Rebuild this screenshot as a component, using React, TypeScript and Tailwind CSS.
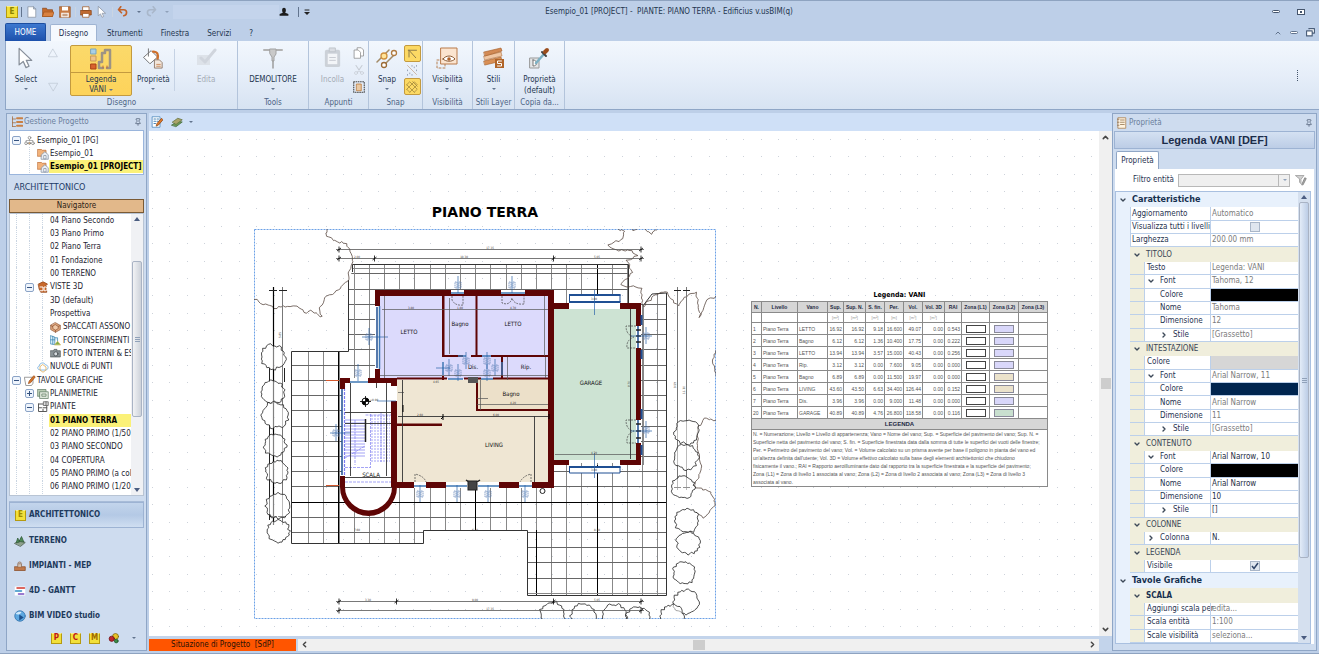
import type { ReactNode } from "react";
import { ChevronDown, ChevronLeft, ChevronRight, ChevronUp, Pin } from "lucide-react";

type Point = [number, number];

/* ---------- small icons ---------- */

const Svg = ({ box = "0 0 16 16", className, children }: { box?: string; className: string; children: ReactNode }) => (
  <svg viewBox={box} className={`shrink-0 ${className}`} fill="none" strokeLinejoin="round" strokeLinecap="round" aria-hidden="true">
    {children}
  </svg>
);

const Caret = ({ className = "fill-slate-500" }: { className?: string }) => (
  <svg viewBox="0 0 4 2" className={`h-[2px] w-1 shrink-0 ${className}`} aria-hidden="true">
    <path d="M0 0h4L2 2z" />
  </svg>
);

const ScrollArrow = ({ className = "" }: { className?: string }) => (
  <svg viewBox="0 0 6 4" className={`h-1 w-[6px] shrink-0 fill-[#4a5c80] ${className}`} aria-hidden="true">
    <path d="M0 0h6L3 4z" />
  </svg>
);

const CursorIcon = ({ className }: { className: string }) => (
  <Svg className={className}>
    <path d="M3 1v12l3-2.500 2 4.500 2.200-1-2-4.300h4z" fill="#fff" stroke="#868e99" strokeWidth="0.900" />
  </Svg>
);

const LetterIcon = ({ letter, color, className = "size-3" }: { letter: string; color: string; className?: string }) => (
  <span className={`flex shrink-0 items-center justify-center border border-[#b59a10] border-t-[#f6ec8c] bg-[#f2e03a] font-bold leading-none ${color} ${className}`}>
    {letter}
  </span>
);

const HouseProjectIcon = () => (
  <Svg className="size-3">
    <path d="M1 2h5l1 1h5v8H1z" fill="#f2b27a" stroke="#c0703a" />
    <path d="M6 9l4.5-4L15 9v6H6z" fill="#e9eef5" stroke="#8491a3" />
    <path d="M9 14v-4h3v4z" fill="#fff" stroke="#8491a3" />
  </Svg>
);

const NodesIcon = () => (
  <Svg className="size-[11px]">
    <path d="M8 4v4M3 11V8h10v3" stroke="#8a8a8a" />
    <circle cx="8" cy="4" r="2" fill="#fff" stroke="#777" />
    <circle cx="3" cy="12" r="2" fill="#fff" stroke="#777" />
    <circle cx="13" cy="12" r="2" fill="#fff" stroke="#777" />
    <circle cx="8" cy="12" r="1.6" fill="#e3ad6a" stroke="#777" />
  </Svg>
);

const View3dIcon = () => (
  <Svg className="size-3">
    <path d="M2 4l6-3 6 3-2 2 1 9-8 0-2-4z" fill="#c8682a" stroke="#8f3f12" />
    <path d="M4 8h4v5H4M10 8h2c2 1 2 4 0 5h-2z" stroke="#fff" strokeWidth="1.3" />
  </Svg>
);

const SectionIcon = () => (
  <Svg className="size-[11px]">
    <path d="M8 1l7 4v6l-7 4-7-4V5z" fill="#dfa57c" stroke="#8d5534" />
    <path d="M8 4l4 2.500v3L8 12 4 9.500v-3zM1 5l3 1.500M15 5l-3 1.500M8 12v3" stroke="#8d5534" fill="#f0c9a8" />
  </Svg>
);

const PhotoInsertIcon = () => (
  <Svg className="size-[11px]">
    <path d="M1 1l6 2v11l-6-1zM7 4h4v5M1 7h6M4 2v11" fill="#d5ecf8" stroke="#2f7fae" />
    <path d="M7 14l4-5 4 5z" fill="#7cae4a" stroke="#c7b24d" />
  </Svg>
);

const CameraIcon = () => (
  <Svg className="size-[11px]">
    <path d="M1 4h4l1-2h4v2h5v9H1z" fill="#8a9396" stroke="#475052" />
    <circle cx="8.500" cy="8.500" r="3" fill="#d7dde0" stroke="#343b3d" />
  </Svg>
);

const CloudIcon = () => (
  <Svg className="size-3">
    <path d="M4 12C0 12 0 7 3 7c0-5 7-6 8-2 5 0 5 7 1 7z" stroke="#6aa8dc" />
    <path d="M8 5l4 3v4l-4 3-4-3V8z" stroke="#e0a748" />
  </Svg>
);

const SheetPenIcon = () => (
  <Svg className="size-3">
    <path d="M1 3h11v8l-2 3H3z" fill="#fff" stroke="#7d7d7d" />
    <path d="M6 11l1-3 6-7 2 1.500L9 10z" fill="#d7772d" stroke="#9d4b14" />
  </Svg>
);

const SitePlanIcon = () => (
  <Svg className="size-3">
    <path d="M1 2h11v9H1z" fill="#b7cbb2" stroke="#66806a" />
    <path d="M4 5h11v9H4z" fill="#dfe8dc" stroke="#66806a" />
    <path d="M7 8h5v3H7z" stroke="#66806a" />
  </Svg>
);

const FloorIcon = () => (
  <Svg className="size-3">
    <path d="M2 4h6M2 4v10h11V7M2 9h4M8 9h5M8 11v3" stroke="#555" strokeWidth="1.300" />
    <path d="M9 1h6v5H9z" fill="#ddd" stroke="#555" />
    <path d="M12 1v5" stroke="#555" />
  </Svg>
);

/* ---------- title bar ---------- */

const IconButton = ({ label, className = "", children }: { label: string; className?: string; children: ReactNode }) => (
  <button aria-label={label} title={label} className={`flex shrink-0 items-center justify-center ${className}`}>
    {children}
  </button>
);

const TitleBar = () => (
  <header className="flex h-6 items-center border-t border-[#8ea3c0] pr-3 pb-[2px] pl-[6px]">
    <div className="flex items-center">
      <LetterIcon letter="E" color="text-[#8b8200] text-[8px]" />
      <span className="ml-[3px] h-[10px] w-px bg-slate-500" />
      <IconButton label="Nuovo" className="ml-1">
        <Svg className="size-3"><path d="M3 1h7l3 3v11H3zM10 1v3h3" fill="#fff" stroke="#8a94a3" /></Svg>
      </IconButton>
      <IconButton label="Apri" className="ml-1">
        <Svg className="size-3"><path d="M1 3h5l1 2h7v9H1z" fill="#c4692a" stroke="#8e4716" /><path d="M3 8h13l-2 6H1z" fill="#d9813f" stroke="#a55820" /></Svg>
      </IconButton>
      <IconButton label="Salva" className="ml-[5px]">
        <Svg className="size-3"><path d="M1 1h14v14H1z" fill="#c77a44" stroke="#9b5524" /><path d="M4 1h8v5H4zM3 9h10v6H3z" fill="#fff" /><path d="M5 11h6M5 13h6" stroke="#9b5524" /></Svg>
      </IconButton>
      <span className="mx-1 h-[10px] w-px bg-slate-300" />
      <IconButton label="Stampa">
        <Svg className="size-3"><path d="M4 1h8v5H4z" fill="#fff" stroke="#a35b27" /><path d="M1 6h14v6H1z" fill="#c06a31" stroke="#8b4516" /><path d="M4 10h8v5H4z" fill="#fff" stroke="#a35b27" /></Svg>
      </IconButton>
      <IconButton label="Seleziona" className="ml-1"><CursorIcon className="size-3" /></IconButton>
      <span className="mx-1 h-[10px] w-px bg-slate-300" />
      <IconButton label="Annulla" className="gap-2">
        <Svg className="size-3"><path d="M2 5h7c5 0 5 7 0 8M5 1L2 5l4 4" stroke="#c2632a" strokeWidth="2.200" /></Svg>
        <Caret />
      </IconButton>
      <IconButton label="Ripristina" className="ml-1 gap-2">
        <Svg className="size-3"><path d="M14 5H7c-5 0-5 7 0 8M11 1l3 4-4 4" stroke="#a9b7ca" strokeWidth="2.200" /></Svg>
        <Caret className="fill-slate-400" />
      </IconButton>
      <span className="ml-1 h-[14px] w-[106px] bg-[#c4d4ec]" />
      <IconButton label="Utente">
        <Svg className="size-[10px]"><path d="M5 5c0-5 6-5 6 0 0 3-1 3-1 4l5 2v3H1v-3l5-2c0-1-1-1-1-4z" fill="#1c1c1c" /></Svg>
      </IconButton>
      <span className="ml-[9px] h-[10px] w-px bg-slate-500" />
      <IconButton label="Personalizza" className="ml-[5px]">
        <Svg box="0 0 6 6" className="size-[6px]"><path d="M1 1h4" stroke="#222" /><path d="M0 3h6L3 6z" fill="#222" /></Svg>
      </IconButton>
    </div>
    <h1 className="grow pl-[6px] text-center whitespace-pre text-[#24364f]">
      {"Esempio_01 [PROJECT] -  PIANTE: PIANO TERRA - Edificius v.usBIM(q)"}
    </h1>
    <div className="flex w-[285px] items-center justify-end gap-[17px] pr-[2px]">
      <IconButton label="Riduci">
        <span className="h-[3px] w-2 rounded-xs border border-slate-600 bg-white" />
      </IconButton>
      <IconButton label="Ingrandisci">
        <span className="flex h-[6px] w-2 items-center justify-center border border-slate-600 bg-white"><span className="size-[2px] bg-slate-600" /></span>
      </IconButton>
    </div>
  </header>
);

const tabs = ["Strumenti", "Finestra", "Servizi", "?"];

const RibbonTabs = () => (
  <nav className="flex h-[17px] items-end pr-1 pl-[5px] text-[#24364f]">
    <button className="h-[18px] w-[41px] rounded-t-xs border border-b-0 border-[#1c4ea0] bg-linear-to-b from-[#3d78cf] to-[#1d51ac] text-white">HOME</button>
    <button className="ml-1 h-[17px] w-[47px] rounded-t-xs border border-b-0 border-[#9fb4d2] bg-[#f5f9fe] pt-px text-[#1e3250]">Disegno</button>
    <div className="flex h-full grow items-center gap-[18px] pt-[2px] pl-[10px]">
      {tabs.map((tab) => (
        <button key={tab}>{tab}</button>
      ))}
    </div>
    <div className="flex h-full items-center gap-2">
      <IconButton label="Comprimi"><ChevronUp size={8} strokeWidth={3} className="text-slate-500" /></IconButton>
      <IconButton label="Riduci documento"><span className="h-[3px] w-2 rounded-xs border border-slate-500 bg-white" /></IconButton>
      <IconButton label="Ripristina documento">
        <Svg className="size-[9px]"><path d="M5 1h10v8h-3M1 5h10v9H1z" stroke="#4b5f7b" strokeWidth="2" fill="#fff" /></Svg>
      </IconButton>
    </div>
  </nav>
);

/* ---------- ribbon ---------- */

const Group = ({ title, className, children }: { title: string; className: string; children: ReactNode }) => (
  <section className={`flex shrink-0 flex-col border-r border-[#b3c4db] ${className}`}>
    <div className="flex grow items-start justify-center pt-1">{children}</div>
    <h2 className="text-center leading-[12px] text-[#4d6484]">{title}</h2>
  </section>
);

const Tool = ({ label, icon, caret = true, muted = false, className = "" }: { label: string; icon: ReactNode; caret?: boolean; muted?: boolean; className?: string }) => (
  <button disabled={muted} className={`flex flex-col items-center leading-[11px] ${muted ? "text-[#a5acb6]" : "text-[#24364f]"} ${className}`}>
    <span className="flex h-[29px] items-center justify-center pb-1">{icon}</span>
    <span className="whitespace-pre-line">{label}</span>
    {caret && <span className="flex h-2 items-center"><Caret /></span>}
  </button>
);

const Ribbon = () => (
  <div className="ml-[5px] flex h-[69px] border-b border-l border-[#8fa6c6] bg-linear-to-b from-[#f2f7fd] via-[#e6eef9] to-[#d7e3f2]">
    <Group title="Disegno" className="w-[232px]">
      <div className="flex w-full items-start">
        <Tool className="w-10" label="Select" icon={<CursorIcon className="size-[22px]" />} />
        <div className="flex w-[14px] flex-col items-center gap-6 pt-[3px]">
          <IconButton label="Su"><Svg className="size-[10px]"><path d="M8 2l7 12H1z" stroke="#b9c2cd" /></Svg></IconButton>
          <IconButton label="Giù"><Svg className="size-[10px]"><path d="M8 14L1 2h14z" stroke="#b9c2cd" /></Svg></IconButton>
        </div>
        <button className="ml-[10px] flex w-[63px] flex-col items-center rounded-xs border border-[#c39a3f] bg-linear-to-b from-[#fbd96a] to-[#fdd35a] leading-[10px] text-[#24364f]">
          <span className="flex h-[27px] w-full items-center justify-center border-b border-[#c39a3f]">
            <Svg box="0 0 22 22" className="size-[22px]">
              <path d="M1 1h5v5H1z" fill="#a9d0e6" stroke="#7aa5bf" /><path d="M1 8h5v5H1z" fill="#f0c48b" stroke="#c99a55" /><path d="M1 16h5v5H1z" fill="#d9632e" stroke="#aa4315" />
              <path d="M13 20H9v-6h3V5h3V2h5v18h-3" stroke="#9d9384" strokeWidth="2.500" />
              <path d="M13 20v-2M17 20v-2" stroke="#c26a3a" />
            </Svg>
          </span>
          <span className="pt-[2px]">Legenda</span>
          <span className="flex items-center gap-[3px]">VANI <Caret /></span>
        </button>
        <Tool className="w-[42px]" label="Proprietà" icon={
          <Svg box="0 0 24 24" className="size-[22px]">
            <path d="M2 11L10 4l7 7-8 7z" fill="#fff" stroke="#6d6d6d" /><path d="M7 2v8" stroke="#6d6d6d" /><path d="M12 5c5 0 6 3 5 8" stroke="#cd6f2b" strokeWidth="2.500" />
            <path d="M14 14h5l3 3v6h-8z" fill="#f3e7dc" stroke="#8f7a6a" /><path d="M16 19h4M16 21h4" stroke="#c98a5c" />
          </Svg>
        } />
        <span className="mt-1 h-[42px] w-px bg-[#c5d2e4]" />
        <Tool className="w-[62px]" muted caret={false} label="Edita" icon={
          <Svg box="0 0 22 22" className="size-[22px]"><path d="M2 8h13v10H2z" fill="#dde2e9" /><path d="M6 11l4 4L20 3" stroke="#d0d5dd" strokeWidth="3" /></Svg>
        } />
      </div>
    </Group>
    <Group title="Tools" className="w-[71px]">
      <Tool label="DEMOLITORE" icon={
        <Svg box="0 0 22 22" className="size-[22px]"><path d="M2 3h18" stroke="#b3b3b3" strokeWidth="2" /><path d="M8 2h6v5l-2 3v4h-2v-4L8 7z" fill="#c9c9c9" stroke="#a2a2a2" /><path d="M11 14v7" stroke="#9d9d9d" strokeWidth="1.500" /></Svg>
      } />
    </Group>
    <Group title="Appunti" className="w-[60px]">
      <Tool className="w-10" muted caret={false} label="Incolla" icon={
        <Svg box="0 0 20 22" className="size-[21px]"><rect x="2" y="3" width="16" height="18" rx="2" fill="#ccd1d8" /><path d="M7 1h6v4H7z" fill="#dadde3" stroke="#bfc4cb" /><path d="M5 7h10v11H5z" fill="#f3f5f8" /><path d="M7 11h6M7 14h6" stroke="#c6cad1" /></Svg>
      } />
      <div className="flex flex-col gap-[5px] pt-[2px]">
        <IconButton label="Copia"><Svg className="size-3"><path d="M6 1h5l3 3v8H6z" fill="#fff" stroke="#8a8a8a" /><path d="M2 4h5l3 3v8H2z" fill="#fff" stroke="#8a8a8a" /></Svg></IconButton>
        <IconButton label="Taglia"><Svg className="size-3"><path d="M4 2l6 9M12 2l-6 9" stroke="#c8cdd5" strokeWidth="1.500" /><circle cx="4" cy="12" r="2" stroke="#c8cdd5" /><circle cx="12" cy="12" r="2" stroke="#c8cdd5" /></Svg></IconButton>
        <IconButton label="Seleziona tutto"><Svg className="size-3"><path d="M1 1h14v14H1z" stroke="#444" strokeDasharray="1 2" strokeWidth="1.500" /><path d="M5 4h6v9H5z" fill="#e9c9a4" stroke="#b8732f" /></Svg></IconButton>
      </div>
    </Group>
    <Group title="Snap" className="w-[54px]">
      <Tool className="w-[33px]" label="Snap" icon={
        <Svg box="0 0 22 22" className="size-[22px]"><path d="M1 15L13 3M7 19L19 7" stroke="#a28a66" strokeWidth="1.500" /><circle cx="8" cy="9" r="3" fill="#ffe49a" stroke="#cf8f3a" strokeWidth="1.300" /><circle cx="8" cy="18" r="2.500" fill="#fff" stroke="#9a6a35" strokeWidth="1.300" /><circle cx="18" cy="6" r="2.500" fill="#fff" stroke="#b07c43" strokeWidth="1.300" /></Svg>
      } />
      <div className="flex w-[17px] flex-col">
        <IconButton label="Snap spigolo" className="size-[17px] rounded-xs border border-[#c39a3f] bg-[#fcd964]"><Svg className="size-3"><path d="M3 3h11M4 3l9 10M4 3v9" stroke="#8d7a47" strokeWidth="1.300" /></Svg></IconButton>
        <IconButton label="Snap punti" className="h-4"><Svg className="size-3"><path d="M2 2l12 12" stroke="#c4a68f" /><path d="M2 8v1M8 2v1M14 2v1M14 8v1M2 14v1M8 14v1M5 12v1M11 4v1" stroke="#7d8aa0" /></Svg></IconButton>
        <IconButton label="Snap griglia" className="size-[17px] rounded-xs border border-[#c39a3f] bg-[#fcd964]"><Svg className="size-3"><path d="M1 5l4-4 10 10-4 4M1 11L11 1l4 4L5 15M1 5l10 10M1 11l4 4M9 1l6 6" stroke="#a0843a" /></Svg></IconButton>
      </div>
    </Group>
    <Group title="Visibilità" className="w-[50px]">
      <Tool label="Visibilità" icon={
        <Svg box="0 0 22 22" className="size-[22px]"><path d="M1 13h8v8H1z" stroke="#b78053" strokeDasharray="2 2" /><path d="M5 1h16v16H5z" fill="#fbe4cf" stroke="#b97a4a" /><path d="M7 12c3-4 9-4 12 0-3 3-9 3-12 0z" stroke="#8b5a33" fill="#fff" /><circle cx="13" cy="12" r="1.800" fill="#b0632b" /></Svg>
      } />
    </Group>
    <Group title="Stili Layer" className="w-[42px]">
      <Tool label="Stili" icon={
        <Svg box="0 0 22 22" className="size-[22px]"><path d="M1 14l17-4 1 4-17 4z" fill="#d98f55" stroke="#a45b22" strokeWidth="0.600" /><path d="M1 9l17-4 1 4-17 4z" fill="#f0c7a4" stroke="#b1713d" strokeWidth="0.600" /><path d="M1 5l17-4 1 3L2 9z" fill="#d28a55" stroke="#a45b22" strokeWidth="0.600" /><path d="M12 12h9v9h-9z" fill="#b06428" /><path d="M18.500 14h-4v2.500h4v2.500h-4" stroke="#fff" /></Svg>
      } />
    </Group>
    <Group title="Copia da..." className="w-[50px]">
      <Tool caret={false} label={"Proprietà\n(default)"} icon={
        <Svg box="0 0 22 22" className="size-[22px]"><path d="M2 11h9v10H2z" fill="#e4e6e8" stroke="#999" /><path d="M5 13v6c5 0 5-6 0-6z" stroke="#777" fill="#fff" /><path d="M8 16L16 7" stroke="#7db1c4" strokeWidth="2.500" /><path d="M14 5l4 4" stroke="#444" strokeWidth="2" /><path d="M17 5l2-2" stroke="#9b4d1c" strokeWidth="4" /></Svg>
      } />
    </Group>
    <div className="flex grow items-center justify-end pr-[21px]">
      <span className="h-[11px] border-l border-dotted border-slate-600" />
    </div>
  </div>
);

/* ---------- left panel ---------- */

const PanelHeader = ({ title, icon }: { title: string; icon: ReactNode }) => (
  <div className="flex h-4 shrink-0 items-center gap-px px-[2px] text-[#6b7f9c]">
    {icon}
    <h2 className="grow">{title}</h2>
    <IconButton label="Blocca"><Pin size={8} className="text-[#44536b]" /></IconButton>
  </div>
);

type Cell = "guide" | "open" | "closed" | "none" | ReactNode;

const TreeCell = ({ cell }: { cell: Cell }) => {
  if (cell === "open" || cell === "closed") {
    return (
      <button aria-label={cell === "open" ? "Chiudi" : "Espandi"} className="mx-[2px] flex size-[9px] shrink-0 items-center justify-center rounded-xs border border-[#8ba3c6] bg-[#eef4fc]">
        <svg viewBox="0 0 5 5" className="size-[5px]" stroke="#34517e" aria-hidden="true">
          <path d={cell === "open" ? "M0 2.5h5" : "M0 2.500h5M2.500 0v5"} />
        </svg>
      </button>
    );
  }
  if (cell === "guide") {
    return <span className="flex w-[13px] shrink-0 justify-center self-stretch"><span className="border-l border-dotted border-slate-300" /></span>;
  }
  return <span className="flex w-[13px] shrink-0 items-center justify-center">{cell === "none" ? null : cell}</span>;
};

const TreeRow = ({ cells, label, active = false }: { cells: Cell[]; label: string; active?: boolean }) => (
  <li className="flex min-h-0 flex-1 items-center overflow-hidden whitespace-nowrap">
    {cells.map((cell, i) => (
      <TreeCell key={i} cell={cell} />
    ))}
    <span className={active ? "grow self-stretch bg-[#fbf178] pl-px leading-[13px] font-bold text-black" : "pl-px text-[#1d2430]"}>{label}</span>
  </li>
);

const navRows: { cells: Cell[]; label: string; active?: boolean }[] = [
  { cells: ["guide", "guide", "guide"], label: "04 Piano Secondo" },
  { cells: ["guide", "guide", "guide"], label: "03 Piano Primo" },
  { cells: ["guide", "guide", "guide"], label: "02 Piano Terra" },
  { cells: ["guide", "guide", "guide"], label: "01 Fondazione" },
  { cells: ["guide", "guide", "guide"], label: "00 TERRENO" },
  { cells: ["guide", "open", <View3dIcon />], label: "VISTE 3D" },
  { cells: ["guide", "guide", "guide"], label: "3D (default)" },
  { cells: ["guide", "guide", "guide"], label: "Prospettiva" },
  { cells: ["guide", "guide", "guide", <SectionIcon />], label: "SPACCATI ASSONO" },
  { cells: ["guide", "guide", "guide", <PhotoInsertIcon />], label: "FOTOINSERIMENTI" },
  { cells: ["guide", "guide", "guide", <CameraIcon />], label: "FOTO INTERNI & ES" },
  { cells: ["guide", "guide", <CloudIcon />], label: "NUVOLE di PUNTI" },
  { cells: ["open", <SheetPenIcon />], label: "TAVOLE GRAFICHE" },
  { cells: ["guide", "closed", <SitePlanIcon />], label: "PLANIMETRIE" },
  { cells: ["guide", "open", <FloorIcon />], label: "PIANTE" },
  { cells: ["guide", "guide", "guide"], label: "01 PIANO TERRA", active: true },
  { cells: ["guide", "guide", "guide"], label: "02 PIANO PRIMO (1/50)" },
  { cells: ["guide", "guide", "guide"], label: "03 PIANO SECONDO" },
  { cells: ["guide", "guide", "guide"], label: "04 COPERTURA" },
  { cells: ["guide", "guide", "guide"], label: "05 PIANO PRIMO (a col" },
  { cells: ["guide", "guide", "guide"], label: "06 PIANO PRIMO (1/20" },
];

const modules = [
  { label: "ARCHITETTONICO", icon: <LetterIcon letter="E" color="text-[#a08b00] text-[8px]" className="size-[11px]" />, active: true },
  { label: "TERRENO", icon: <Svg className="size-3"><path d="M1 11l7-4 7 3-6 5z" fill="#8da08c" stroke="#4d5e50" /><path d="M3 10l2-6 2 5zM7 8l3-6 3 7z" fill="#4d8a55" stroke="#2f5a38" /></Svg> },
  { label: "IMPIANTI - MEP", icon: <Svg className="size-3"><path d="M1 9h14v5H1z" fill="#c07a4c" stroke="#8a4c26" /><path d="M5 9V5h5v4M5 4c1-2 4-2 5 0" fill="#d9c6b5" stroke="#8a6a55" /></Svg> },
  { label: "4D - GANTT", icon: <Svg className="size-3"><path d="M1 2h14v12H1z" fill="#fff" /><path d="M4 4h10" stroke="#d1352b" strokeWidth="2" /><path d="M2 8h8" stroke="#2f8fc4" strokeWidth="2" /><path d="M6 12h7" stroke="#7a4fc0" strokeWidth="2" /></Svg> },
  { label: "BIM VIDEO studio", icon: <Svg className="size-3"><circle cx="8" cy="8" r="7" fill="#5ea8e0" stroke="#2f6fa8" /><path d="M2 5c3-3 6-3 8-2-2 3-5 4-8 2z" fill="#cfe8fa" /><path d="M7 6l6 4-6 4z" fill="#1d4f8a" /></Svg> },
];

const Scrollbar = ({ before, thumb, className = "" }: { before: string; thumb: string; className?: string }) => (
  <div className={`flex w-[12px] shrink-0 flex-col items-center py-[3px] ${className}`}>
    <ScrollArrow className="rotate-180" />
    <div className={`shrink-0 ${before}`} />
    <div className={`flex w-[10px] shrink-0 flex-col items-center justify-center gap-px rounded-xs border border-[#a9b3c4] bg-linear-to-r ${thumb}`}>
      <span className="h-px w-[5px] bg-slate-400" />
      <span className="h-px w-[5px] bg-slate-400" />
      <span className="h-px w-[5px] bg-slate-400" />
    </div>
    <div className="grow" />
    <ScrollArrow />
  </div>
);

const LeftPanel = () => (
  <aside className="flex w-[141px] shrink-0 flex-col border border-[#8fa6c6] bg-[#cedcef] px-[2px] pb-[2px]">
    <PanelHeader
      title="Gestione Progetto"
      icon={<Svg className="size-3"><path d="M2 1v13M2 4h4M2 9h4M2 14h4" stroke="#a06a3c" /><path d="M8 3h7M8 8h7M8 13h7" stroke="#c98044" strokeWidth="2.500" /></Svg>}
    />
    <ul className="flex h-[45px] shrink-0 flex-col border border-[#9ab5dc] bg-white pt-[3px] pb-px">
      <TreeRow cells={["open", <NodesIcon />]} label="Esempio_01 [PG]" />
      <TreeRow cells={["none", "guide", <HouseProjectIcon />]} label="Esempio_01" />
      <TreeRow cells={["none", "guide", <HouseProjectIcon />]} label="Esempio_01 [PROJECT]" active />
    </ul>
    <h3 className="flex h-6 shrink-0 items-center pt-px pl-[5px] text-[9px] text-[#1d3a66]">ARCHITETTONICO</h3>
    <button className="h-[14px] shrink-0 border border-[#7a5a34] bg-[#e2b88a] leading-[12px] text-[#2c2115]">Navigatore</button>
    <div className="flex min-h-0 grow border border-[#b8c4d4] bg-white">
      <ul className="flex min-w-0 grow flex-col pb-px">
        {navRows.map((row) => (
          <TreeRow key={row.label} {...row} />
        ))}
      </ul>
      <Scrollbar before="h-10" thumb="h-[156px] from-[#f2f3f5] to-[#cdd2da]" className="bg-[#f0f1f4]" />
    </div>
    <div className="h-[6px] shrink-0 border-b border-[#a8bcd8]" />
    <nav className="flex shrink-0 flex-col">
      {modules.map((m) => (
        <button
          key={m.label}
          className={`flex items-center gap-[3px] pl-[5px] font-bold text-[#1d3a5c] ${m.active ? "h-[26px] border border-[#9db3d3] bg-linear-to-b from-[#c3d5ec] via-[#b4c9e5] to-[#cfdef1]" : "h-[25px]"}`}
        >
          {m.icon}
          {m.label}
        </button>
      ))}
    </nav>
    <div className="flex h-5 shrink-0 items-center justify-end gap-2 pr-2 text-[8px]">
      <LetterIcon letter="P" color="text-[#c0141a]" className="size-[11px]" />
      <LetterIcon letter="C" color="text-[#c0141a]" className="size-[11px]" />
      <LetterIcon letter="M" color="text-[#a06a00]" className="size-[11px]" />
      <Svg className="size-3"><circle cx="10" cy="6" r="4" fill="#e8c326" stroke="#7a6410" /><circle cx="5" cy="9" r="3.500" fill="#c1272d" stroke="#6c1014" /><circle cx="11" cy="12" r="2.500" fill="#3c8b46" stroke="#1f5527" /></Svg>
      <span className="pl-1"><Caret /></span>
    </div>
  </aside>
);

/* ---------- floor plan ---------- */

const wobble = (i: number) => Math.sin(i * 12.9898) * 43758.5453 - Math.floor(Math.sin(i * 12.9898) * 43758.5453) - 0.5;

const jaggedLine = (points: Point[], size: number) => {
  let d = `M${points[0][0]} ${points[0][1]}`;
  for (let i = 1; i < points.length; i++) {
    const [x0, y0] = points[i - 1];
    const [x1, y1] = points[i];
    const steps = Math.max(2, Math.round(Math.hypot(x1 - x0, y1 - y0) / 2.5));
    for (let s = 1; s <= steps; s++) {
      const t = s / steps;
      const n = i * 17 + s;
      d += `L${(x0 + (x1 - x0) * t + wobble(n) * size).toFixed(1)} ${(y0 + (y1 - y0) * t + wobble(n + 91) * size).toFixed(1)}`;
    }
  }
  return d;
};

const shrub = (cx: number, cy: number, r: number) => {
  const points: Point[] = [];
  for (let i = 0; i < 36; i++) {
    const a = (i / 36) * Math.PI * 2;
    const rr = r * (0.93 + wobble(i * 3 + cx + cy) * 0.24);
    points.push([cx + Math.cos(a) * rr, cy + Math.sin(a) * rr]);
  }
  return `M${points.map(([x, y]) => `${x.toFixed(1)} ${y.toFixed(1)}`).join("L")}Z`;
};

const shrubs: [number, number, number][] = [
  [273, 357, 13], [273, 392, 12], [275, 415, 14], [275, 445, 12], [277, 472, 12], [278, 506, 13], [278, 531, 12],
  [687, 432, 13], [686, 457, 13], [683, 487, 12], [687, 521, 13], [688, 543, 12], [684, 573, 12], [686, 602, 13],
  [552, 614, 13], [583, 616, 13], [614, 616, 13], [638, 619, 13], [672, 616, 12],
];

const canopies: Point[][] = [
  [[327, 229], [326, 236], [337, 242], [346, 243], [352, 254], [353, 262], [349, 271], [348, 279], [338, 290], [325, 297], [319, 309], [322, 317], [311, 311], [306, 313], [299, 307], [288, 306], [274, 308], [263, 304], [254, 299]],
  [[618, 229], [624, 231], [621, 240], [608, 244], [614, 250], [632, 250], [637, 256], [627, 260], [632, 272], [620, 285], [641, 288], [643, 306], [652, 298], [656, 294], [665, 291], [678, 306], [686, 296], [696, 293], [700, 317], [706, 300], [716, 297]],
  [[632, 229], [634, 231], [637, 229]],
  [[645, 229], [651, 234], [656, 229]],
  [[716, 350], [712, 362], [716, 376]],
  [[716, 420], [704, 419], [697, 428], [698, 448], [702, 468], [694, 486], [710, 492], [716, 503], [704, 518], [696, 512]],
];

const range = (from: number, count: number, step: number) => Array.from({ length: count }, (_, i) => from + i * step);

const Dim = ({ y, ticks, labels }: { y: number; ticks: number[]; labels: [number, string][] }) => (
  <g>
    <path d={`M336 ${y}H644`} stroke="#555" strokeWidth="0.8" />
    {ticks.map((x) => (
      <path key={x} d={`M${x} ${y - 3}v6M${x - 2} ${y + 1.5}l4 -3`} stroke="#000" strokeWidth="0.8" />
    ))}
    {labels.map(([x, t]) => (
      <text key={x} x={x} y={y - 1} fontSize="3" fill="#444" textAnchor="middle">{t}</text>
    ))}
  </g>
);

const rooms: [string, number, number, number, number][] = [
  ["#dcdafc", 380, 296, 168, 83],
  ["#efe6d3", 397, 380, 151, 102],
  ["#cde3d3", 554, 308, 82, 152],
];

const roomNames: [string, number, number][] = [
  ["LETTO", 409, 334], ["Bagno", 460, 326], ["LETTO", 513, 326], ["Rip.", 526, 369], ["Dis.", 473, 369],
  ["Bagno", 511, 396], ["LIVING", 494, 447], ["GARAGE", 591, 385], ["SCALA", 371, 477],
];

const blueMarks: Point[] = [
  [458, 285], [512, 285], [358, 373], [466, 361], [487, 361], [458, 373], [487, 373], [369, 337], [646, 336], [646, 430],
  [336, 433], [420, 494], [457, 494], [488, 494], [525, 494], [449, 368], [495, 368],
];

const FloorPlan = () => (
  <svg viewBox="254 229 462 390" className="h-[390px] w-[462px]" fill="none" fontFamily="'DejaVu Sans Condensed', 'DejaVu Sans', sans-serif" role="img" aria-label="Pianta piano terra">
    <defs>
      <clipPath id="paving">
        <path d="M352 264H629V304H644L652 294L667 293V596H527V531H423V544H291V351H348V280L352 272Z" />
      </clipPath>
    </defs>
    <rect x="254.500" y="229.500" width="461" height="389" stroke="#6ba0e6" strokeDasharray="2 1" />

    <g clipPath="url(#paving)" shapeRendering="crispEdges">
      {range(308.8, 24, 15.17).map((x) => <path key={x} d={`M${x} 260V600`} stroke="#888" />)}
      {range(273.8, 22, 15.22).map((y) => <path key={y} d={`M290 ${y}H670`} stroke="#666" />)}
      <path d="M338.500 350V545M475.500 488V531M597.500 465V596M536.500 530V596M597.500 260V300M290 502.500H670" stroke="#000" />
      <path d="M352 268.500H628M527 593.500H667M643.500 303V465M354.500 265V350" stroke="#888" />
    </g>
    <path d="M352.500 272V264.500H628.500V303M644 304.500L652 294L666.500 293V595.500H527.500V530.500H423.500V543.500H291.500V351.500H348.500V280" stroke="#333" />

    <path d="M342 380H380V293H551V306H639V463H551V485H394.500V487A26 26 0 0 1 342 487Z" fill="#fff" />
    {rooms.map(([fill, x, y, w, h]) => <rect key={fill} x={x} y={y} width={w} height={h} fill={fill} />)}
    <rect x="477" y="379" width="71" height="31" fill="#ece0c9" />

    {canopies.map((points, i) => <path key={i} d={jaggedLine(points, 2.2)} stroke="#5a4a42" strokeWidth="0.8" />)}
    <path d="M282.500 287V525M677.500 287V490M686.500 287V490" stroke="#777" />
    <path d="M273.500 287V525" stroke="#000" strokeWidth="1.200" />
    <path d="M269.500 368V382M269.500 425V520M284.500 368V382M269 290.500h8M279 290.500h8M269 516.500h8M278 516.500h8M674 290.500h7M683 290.500h7M674 487.500h7M683 487.500h7" stroke="#222" />
    {shrubs.map(([x, y, r]) => <path key={`${x}-${y}`} d={shrub(x, y, r)} stroke="#222" strokeWidth="0.8" fill="#fff" fillOpacity="0.5" />)}

    <Dim y={249.5} ticks={[339, 641]} labels={[[490, "17.35"]]} />
    <Dim y={258.5} ticks={[339, 374.5, 553.5, 641]} labels={[[357, "2.00"], [464, "10.30"], [597, "5.05"]]} />
    <Dim y={601.5} ticks={[339, 396.5, 553.5, 641]} labels={[[368, "3.30"], [475, "9.00"], [597, "5.05"]]} />
    <Dim y={610.5} ticks={[339, 641]} labels={[[490, "17.35"]]} />

    {/* stairs */}
    <g stroke="#7c7cf0" strokeWidth="0.7">
      {range(420, 13, 3).map((y) => <path key={y} d={`M345 ${y}H365`} />)}
      {range(416, 16, 3).map((y) => <path key={y} d={`M371 ${y}H390`} strokeDasharray="2 1" />)}
      <path d="M355 420V465M381 412V462M345 458L365 446M370.500 414V468M345 467.500H370M345 482H391M365.500 415H391" strokeDasharray="3 1" />
      <path d="M344.500 384V476" strokeWidth="1.200" strokeDasharray="3 1" />
    </g>
    <path d="M345 412.500H391M345 423.500H391M345 477.500H391M345 487.500H392M350.500 383V476M386.500 383V476M376.500 383V388" stroke="#333" strokeWidth="0.9" />
    <path d="M365.500 419V442" stroke="#222" strokeWidth="1.500" />
    <circle cx="365.500" cy="401.500" r="3.500" fill="#fff" stroke="#000" />
    <path d="M365.500 401.500v-3.500a3.500 3.500 0 0 1 3.500 3.500zM365.500 401.500v3.500a3.500 3.500 0 0 1 -3.500 -3.500z" fill="#000" />
    <path d="M360 401.500h11M365.500 396v11" stroke="#000" strokeWidth="0.8" />

    {/* walls */}
    <g fill="#5e0505">
      <path d="M375 290H554V303H569V309H554V460H569V465H554V488H397V482H548V296H380V306H375Z" />
      <path d="M620 303H641V326H636V309H620ZM636 348H641V420H636ZM636 443H641V465H620V460H636Z" />
      <path d="M375 369H380V378H397V386H391V383H368V378H375ZM340 378H350V383H345V389H340ZM391 401H397V487H391Z" />
      <path d="M340 476H345V487A23.500 23.500 0 0 0 392 487V482H397V487A28.500 29 0 0 1 340 487Z" />
      <path d="M442 296h2.500v60h-2.500zM475.500 296h2v60h-2zM442 355h21v2h-21zM471 355h11v2h-11zM491 355h57v2h-57z" />
      <path d="M442 376h2v4h-2zM397 377.500h50v2h-50zM464 377.500h17v2h-17zM493 377.500h55v2h-55zM501 357h2v21h-2zM476 378h2v33h-2zM476 409h72v2h-72zM397 423.500h45v2.500h-45z" />
    </g>
    <rect x="468" y="377" width="10" height="6" fill="#555" />
    <path d="M469 482l-3 -2M477 482l3 -2" stroke="#222" strokeWidth="1.500" />

    {/* openings */}
    <g fill="#fff">
      <path d="M569 303H620V309H569ZM350 378H368V383H350ZM391 386H397V401H391ZM375 306H380V369H375ZM636 326H641V348H636ZM636 420H641V443H636Z" />
      <path d="M451 290H464V294H451ZM501 290H525V294H501ZM414 482H426V488H414ZM446 482H499V488H446ZM519 482H532V488H519Z" />
    </g>
    <rect x="468" y="481" width="9" height="9" fill="#444" stroke="#222" />
    <path d="M569.500 294.500H620V302H569.500Z" fill="#fff" stroke="#1f4f93" />
    <path d="M569 295H620.500M569 302H620.500" stroke="#1f4f93" strokeWidth="2" />
    <path d="M569.500 466.500H620V473H569.500Z" stroke="#1f4f93" fill="#fff" />
    <g stroke="#1f4f93" strokeWidth="2">
      <path d="M569 467H620.500" />
      <path d="M377 307V368M638 326V348M638 420V443M342 389V475" strokeWidth="1.500" />
      <path d="M641.500 315v10M641.500 350v9M641.500 409v10M641.500 445v10" />
    </g>
    <g stroke="#3f78b4" strokeWidth="1.500">
      <path d="M379.500 306V369M451 293H464M501 293H525M350 382H368M414 486H426M446 486H467M478 486H499M519 486H532M458 356H466M482 356H491M448 379H463M481 379H493M443 362V375M502 362V375" />
      <path d="M636 330h5M636 336h5M636 342h5M636 424h5M636 431h5M636 438h5" stroke="#222" />
    </g>
    <g stroke="#444" strokeWidth="0.7" strokeDasharray="2 1">
      <path d="M452 296V300Q455 306 463 305V296M502 296V303Q510 306 512 298Q514 305 524 304V296M636 326L626 326Q626 335 634 337Q626 340 627 348H636M636 420H626Q626 430 634 431Q626 434 627 443H636" />
      <path d="M415 482V474Q424 476 426 482M531 482V474Q523 476 520 482" />
    </g>
    <g stroke="#2a61a8" strokeWidth="0.7">
      {blueMarks.map(([x, y]) => (
        <g key={`${x}-${y}`}>
          <path d={`M${x} ${y - 9}v17`} />
          <path d={`M${x - 3} ${y - 3}h2v6h-2zM${x + 1} ${y - 3}h2v6h-2z`} stroke="#5d7fb4" strokeDasharray="1.500 0.500" />
        </g>
      ))}
      <path d="M362 337H388M630 336H652M630 431H652M330 433H350M594.500 290V315M594.500 453V478M436 368H450M377 401H396" />
    </g>

    {/* room dimensions */}
    <path d="M384.500 296V378M382 309.500H548M449.500 298V354M544.500 296V356M380 375.500H548M555 454.500H636M477 404.500H548M477 398.500H488M507.500 357V380M480.500 380V410M545.500 357V378M398 392.500H404" stroke="#555" strokeWidth="0.7" />
    <path d="M402.500 380V482M534.500 416V482M398 416.500H548M630.500 309V459" stroke="#333" strokeWidth="0.9" />
    <path d="M443 414v6M403 405v7M443 417l-2 2M549 414v5" stroke="#000" />
    <g fontSize="3" fill="#333" textAnchor="middle">
      <text x="411" y="308.500">3.80</text>
      <text x="460" y="308.500">1.80</text>
      <text x="513" y="308.500">4.70</text>
      <text x="436" y="383">4.65</text>
      <text x="420" y="415.500">2.60</text>
      <text x="496" y="415.500">6.00</text>
      <text x="513" y="403.500">4.20</text>
      <text x="594" y="453.500">4.70</text>
      <text x="594" y="299.500">3.00</text>
      <text x="594" y="471">3.00</text>
      <text x="475" y="531">6.10</text>
      <text x="357" y="531">7.60</text>
      <text x="597" y="531">8.10</text>
      <text x="374" y="401">+0.00</text>
      <text x="281" y="335" transform="rotate(-90 281 335)">5.85</text>
      <text x="676" y="385" transform="rotate(-90 676 385)">9.55</text>
      <text x="685" y="390" transform="rotate(-90 685 390)">11.30</text>
      <text x="630" y="384" transform="rotate(-90 630 384)">8.70</text>
    </g>
    <path d="M326 380.500H339M326 485.500H339" stroke="#d4572c" strokeWidth="1.200" />
    <circle cx="542.500" cy="491" r="2.500" stroke="#222" />
    <g fontSize="6" fill="#111" textAnchor="middle">
      {roomNames.map(([name, x, y]) => <text key={`${name}-${x}-${y}`} x={x} y={y}>{name}</text>)}
    </g>
  </svg>
);

/* ---------- legend table ---------- */

const legendColumns = [
  { name: "N.", unit: "", width: "w-[10px]" },
  { name: "Livello", unit: "", width: "w-9" },
  { name: "Vano", unit: "", width: "w-[30px]" },
  { name: "Sup.", unit: "[m²]", width: "w-4" },
  { name: "Sup. N.", unit: "[m²]", width: "w-[22px]" },
  { name: "S. fin.", unit: "[m²]", width: "w-[19px]" },
  { name: "Per.", unit: "[m]", width: "w-[19px]" },
  { name: "Vol.", unit: "[m³]", width: "w-[19px]" },
  { name: "Vol. 3D", unit: "[m³]", width: "w-[22px]" },
  { name: "RAI", unit: "", width: "w-[17px]" },
  { name: "Zona (L1)", unit: "", width: "w-7" },
  { name: "Zona (L2)", unit: "", width: "w-[29px]" },
  { name: "Zona (L3)", unit: "", width: "w-[29px]" },
];

const legendRows = [
  { values: ["1", "Piano Terra", "LETTO", "16.92", "16.92", "9.18", "16.600", "49.07", "0.00", "0.543"], zone: "bg-[#d9d7fa]" },
  { values: ["2", "Piano Terra", "Bagno", "6.12", "6.12", "1.36", "10.400", "17.75", "0.00", "0.222"], zone: "bg-[#d9d7fa]" },
  { values: ["3", "Piano Terra", "LETTO", "13.94", "13.94", "3.57", "15.000", "40.43", "0.00", "0.256"], zone: "bg-[#d9d7fa]" },
  { values: ["4", "Piano Terra", "Rip.", "3.12", "3.12", "0.00", "7.600", "9.05", "0.00", "0.000"], zone: "bg-[#d9d7fa]" },
  { values: ["5", "Piano Terra", "Bagno", "6.89", "6.89", "0.00", "11.500", "19.97", "0.00", "0.000"], zone: "bg-[#ebe2cb]" },
  { values: ["6", "Piano Terra", "LIVING", "43.60", "43.50", "6.63", "34.400", "126.44", "0.00", "0.152"], zone: "bg-[#ebe2cb]" },
  { values: ["7", "Piano Terra", "Dis.", "3.96", "3.96", "0.00", "9.000", "11.48", "0.00", "0.000"], zone: "bg-[#d9d7fa]" },
  { values: ["20", "Piano Terra", "GARAGE", "40.89", "40.89", "4.76", "26.800", "118.58", "0.00", "0.116"], zone: "bg-[#c9e0cf]" },
];

const Legend = () => (
  <table className="w-[296px] table-fixed border-collapse bg-white font-['Liberation_Sans_Narrow','Liberation_Sans',sans-serif] text-[5px] leading-[8px] text-[#555]">
    <caption className="font-['DejaVu_Sans_Condensed','DejaVu_Sans',sans-serif] text-[7px] leading-[11px] font-bold text-black">Legenda: VANI</caption>
    <thead>
      <tr className="h-[11px] bg-[#d6d6d6] text-[#1f2a44]">
        {legendColumns.map((c) => (
          <th key={c.name} className={`border border-[#8a8a8a] p-0 whitespace-nowrap ${c.width}`}>{c.name}</th>
        ))}
      </tr>
      <tr className="h-[10px] text-[4px] text-[#999]">
        {legendColumns.map((c) => (
          <td key={c.name} className="border border-[#8a8a8a] p-0 text-center">{c.unit}</td>
        ))}
      </tr>
    </thead>
    <tbody>
      {legendRows.map((row) => (
        <tr key={row.values[0]} className="h-[12px]">
          {row.values.map((value, i) => (
            <td key={i} className={`border border-[#8a8a8a] p-0 whitespace-nowrap ${i < 3 ? "pl-px text-left" : "pr-px text-right"}`}>{value}</td>
          ))}
          <td className="border border-[#8a8a8a] p-0"><div className="mx-auto h-2 w-5 border border-[#444] bg-white" /></td>
          <td className="border border-[#8a8a8a] p-0"><div className={`mx-auto h-2 w-5 border border-[#8a8a9a] ${row.zone}`} /></td>
          <td className="border border-[#8a8a8a] p-0" />
        </tr>
      ))}
    </tbody>
    <tfoot>
      <tr className="h-[11px] bg-[#d6d6d6]">
        <th colSpan={13} className="border border-[#8a8a8a] p-0 text-[6px] text-[#1f2a44]">LEGENDA</th>
      </tr>
      <tr>
        <td colSpan={13} className="border border-[#8a8a8a] px-px py-0 whitespace-pre-line">
          {`N. = Numerazione; Livello = Livello di appartenenza; Vano = Nome del vano; Sup. = Superficie del pavimento del vano; Sup. N. =
Superficie netta del pavimento del vano; S. fin. = Superficie finestrata data dalla somma di tutte le superfici dei vuoti delle finestre;
Per. = Perimetro del pavimento del vano; Vol. = Volume calcolato su un prisma avente per base il poligono in pianta del vano ed
un'altezza definita dall'utente; Vol. 3D = Volume effettivo calcolato sulla base degli elementi architettonici che chiudono
fisicamente il vano.; RAI = Rapporto aeroilluminante dato dal rapporto tra la superficie finestrata e la superficie del pavimento;
Zona (L1) = Zona di livello 1 associata al vano; Zona (L2) = Zona di livello 2 associata al vano; Zona (L3) = Zona di livello 3
associata al vano.`}
        </td>
      </tr>
    </tfoot>
  </table>
);

/* ---------- canvas ---------- */

const dots = [3, 20, 38, 55, 72];

const DotGrid = () => (
  <svg className="absolute inset-0 size-full" aria-hidden="true">
    <defs>
      <pattern id="dots" width="87" height="87" patternUnits="userSpaceOnUse">
        {dots.map((x) => dots.map((y) => <rect key={`${x}-${y}`} x={x} y={y + 5} width="1" height="1" fill="#cdd2da" />))}
      </pattern>
    </defs>
    <rect width="100%" height="100%" fill="url(#dots)" />
  </svg>
);

const Canvas = () => (
  <main className="ml-[2px] flex min-w-0 grow flex-col">
    <div className="flex h-[18px] shrink-0 items-center gap-2 bg-[#cfe0f7] pl-[2px]">
      <IconButton label="Modifica tavola">
        <Svg className="size-3"><path d="M2 1h10v14H2z" fill="#fff" stroke="#4a86b8" /><path d="M4 4h2M4 7h2M4 10h2M8 4h2M8 7h2" stroke="#4a86b8" strokeWidth="1.500" /><path d="M7 13l1-3 6-7 2 2-6 7z" fill="#e07a2c" stroke="#8a4312" /></Svg>
      </IconButton>
      <IconButton label="Livelli" className="gap-[6px]">
        <Svg className="size-3"><path d="M1 12l8-5 6 1-8 6z" fill="#6a9a58" stroke="#44693a" /><path d="M2 8l7-5 6 2-8 6z" fill="#a9a46a" stroke="#66723f" /></Svg>
        <Caret />
      </IconButton>
    </div>
    <div className="flex min-h-0 grow">
      <div className="relative min-w-0 grow overflow-hidden bg-white">
        <DotGrid />
        <div className="relative flex items-start gap-[35px] pt-[71px] pl-[105px]">
          <figure className="shrink-0">
            <figcaption className="pb-[7px] text-center font-['DejaVu_Sans',sans-serif] text-[14px] leading-[20px] font-bold text-black">PIANO TERRA</figcaption>
            <FloorPlan />
          </figure>
          <div className="shrink-0 pt-[88px]">
            <Legend />
          </div>
        </div>
      </div>
      <div className="flex w-[13px] shrink-0 flex-col items-center justify-between bg-[#f0f0f0] py-[2px]">
        <ChevronUp size={9} strokeWidth={4} className="text-[#444]" />
        <span className="h-[11px] w-[10px] bg-[#cdcdcd]" />
        <ChevronDown size={9} strokeWidth={4} className="text-[#444]" />
      </div>
    </div>
    <div className="flex h-[15px] shrink-0 items-center bg-[#c3d4eb] pt-[2px]">
      <button className="h-3 w-[147px] bg-[#ff5500] leading-[12px] whitespace-pre text-[#2a1206]">{"Situazione di Progetto  [SdP]"}</button>
      <div className="ml-[2px] flex h-3 grow items-center justify-between bg-[#f0f0f0] px-[2px]">
        <ChevronLeft size={9} strokeWidth={4} className="text-[#444]" />
        <span className="h-[10px] w-3 bg-[#cdcdcd]" />
        <ChevronRight size={9} strokeWidth={4} className="text-[#444]" />
      </div>
      <span className="w-[13px]" />
    </div>
  </main>
);

/* ---------- properties panel ---------- */

type PropRow = {
  kind: "section" | "group" | "row" | "top";
  name: string;
  value?: string;
  depth?: 0 | 1;
  arrow?: "down" | "right";
  swatch?: string;
  check?: boolean;
  bold?: boolean;
  dark?: boolean;
};

const fontRows = (font: string, size: string, style: string, swatch: string, dark = false): PropRow[] => [
  { kind: "row", name: "Font", value: `${font}, ${size}`, arrow: "down", dark },
  { kind: "row", name: "Colore", depth: 1, swatch },
  { kind: "row", name: "Nome", value: font, depth: 1, dark },
  { kind: "row", name: "Dimensione", value: size, depth: 1, dark },
  { kind: "row", name: "Stile", value: style, depth: 1, arrow: "right", dark },
];

const propRows: PropRow[] = [
  { kind: "section", name: "Caratteristiche" },
  { kind: "top", name: "Aggiornamento", value: "Automatico" },
  { kind: "top", name: "Visualizza tutti i livelli", check: false },
  { kind: "top", name: "Larghezza", value: "200.00 mm" },
  { kind: "group", name: "TITOLO" },
  { kind: "row", name: "Testo", value: "Legenda: VANI" },
  ...fontRows("Tahoma", "12", "[Grassetto]", "bg-black"),
  { kind: "group", name: "INTESTAZIONE" },
  { kind: "row", name: "Colore", swatch: "bg-[#d6d6d6]" },
  ...fontRows("Arial Narrow", "11", "[Grassetto]", "bg-[#00254f]"),
  { kind: "group", name: "CONTENUTO" },
  ...fontRows("Arial Narrow", "10", "[]", "bg-black", true),
  { kind: "group", name: "COLONNE" },
  { kind: "row", name: "Colonna", value: "N.", arrow: "right", dark: true },
  { kind: "group", name: "LEGENDA" },
  { kind: "row", name: "Visibile", check: true },
  { kind: "section", name: "Tavole Grafiche" },
  { kind: "group", name: "SCALA", bold: true },
  { kind: "row", name: "Aggiungi scala per", value: "edita..." },
  { kind: "row", name: "Scala entità", value: "1:100" },
  { kind: "row", name: "Scale visibilità", value: "seleziona..." },
];

const Arrow = ({ dir }: { dir: "down" | "right" }) =>
  dir === "down" ? <ChevronDown size={8} strokeWidth={4} className="shrink-0 text-[#3c4858]" /> : <ChevronRight size={8} strokeWidth={4} className="shrink-0 text-[#3c4858]" />;

const Property = ({ row }: { row: PropRow }) => {
  if (row.kind === "section") {
    return (
      <div className="flex shrink-0 grow basis-[15px] items-center">
        <button aria-label={row.name} className="flex w-[14px] justify-center"><Arrow dir="down" /></button>
        <h3 className="pl-[2px] text-[9px] font-bold text-[#16304f]">{row.name}</h3>
      </div>
    );
  }
  if (row.kind === "group") {
    return (
      <div className="ml-[14px] flex shrink-0 grow basis-[14px] items-center bg-[#f0eedc]">
        <button aria-label={row.name} className="flex w-[14px] justify-center"><Arrow dir="down" /></button>
        <h4 className={`pl-[2px] ${row.bold ? "font-bold text-[#16304f]" : "text-[#3a4656]"}`}>{row.name}</h4>
      </div>
    );
  }
  const id = row.check === undefined ? undefined : row.name.replaceAll(" ", "-");
  return (
    <div className="ml-[14px] flex shrink-0 grow basis-[13px] border-b border-[#bcd0ea] bg-white">
      {row.kind === "row" && <span className="w-[14px] shrink-0 bg-[#f0eedc]" />}
      <div className={`flex shrink-0 items-center border-l border-[#bcd0ea] whitespace-nowrap text-[#1f3350] ${row.kind === "row" ? "w-[66px] pl-[2px]" : "w-20 pl-px"}`}>
        {row.depth === 1 && <span className="w-[13px] shrink-0" />}
        {row.arrow && <span className="flex w-[13px] shrink-0"><Arrow dir={row.arrow} /></span>}
        <label htmlFor={id}>{row.name}</label>
      </div>
      <div className={`flex min-w-0 grow items-center border-l border-[#bcd0ea] whitespace-nowrap ${row.dark ? "text-[#1f2f45]" : "text-[#7b7b7b]"}`}>
        {row.swatch && <span className={`grow self-stretch ${row.swatch}`} />}
        {row.value && <span className="pl-px">{row.value}</span>}
        {id && (
          <span className="mx-auto grid size-[10px] place-items-center">
            <input id={id} type="checkbox" defaultChecked={row.check} className="peer col-start-1 row-start-1 size-[10px] appearance-none border border-[#a9b6c8] bg-[#dfe6ef]" />
            <svg viewBox="0 0 10 10" className="pointer-events-none invisible col-start-1 row-start-1 size-[10px] peer-checked:visible" fill="none" stroke="#2f4468" strokeWidth="1.5" aria-hidden="true">
              <path d="M2 5l2 2.500L8 2" />
            </svg>
          </span>
        )}
      </div>
    </div>
  );
};

const RightPanel = () => (
  <aside className="flex w-[205px] shrink-0 flex-col border border-[#8fa6c6] bg-[#cedcef] p-px pb-[6px]">
    <PanelHeader
      title="Proprietà"
      icon={<Svg className="size-3"><path d="M3 1h10v14H3z" fill="#fff3df" stroke="#a87b4a" /><path d="M2 3h2M2 7h2M2 11h2M6 4h5M6 7h5M6 10h5" stroke="#8b6c45" /></Svg>}
    />
    <h2 className="shrink-0 border border-[#9db3d3] bg-linear-to-b from-[#d4e1f2] to-[#bccde6] text-center font-['Liberation_Sans',sans-serif] text-[11px] leading-[16px] font-bold text-[#1b2c49]">Legenda VANI [DEF]</h2>
    <div className="flex h-5 shrink-0 items-end pl-[2px]">
      <button className="h-[18px] w-[43px] rounded-t-xs border border-b-0 border-[#8fa6c6] bg-white text-[#1f3350]">Proprietà</button>
    </div>
    <div className="mx-px flex min-h-0 grow flex-col bg-white pr-[3px]">
      <div className="flex h-[22px] shrink-0 items-center justify-end gap-1 pr-1">
        <label htmlFor="filter" className="text-[#1f3350]">Filtro entità</label>
        <div className="relative flex">
          <select id="filter" className="h-[13px] w-[112px] appearance-none border border-[#b8b8b8] bg-[#efefef]">
            <option aria-label="Tutte" />
          </select>
          <span className="pointer-events-none absolute inset-y-0 right-0 flex w-3 items-center justify-center border-l border-[#b8b8b8]"><Caret className="fill-slate-400" /></span>
        </div>
        <IconButton label="Filtra" className="pl-px"><Svg className="size-3"><path d="M1 2h11L8 7v6l-2-2V7z" fill="#d0d0d0" stroke="#999" /><path d="M9 14l4-9 2 1-4 8z" fill="#aaa" stroke="#777" /></Svg></IconButton>
      </div>
      <div className="flex min-h-0 grow border border-[#a9c0e0] bg-[#e8f1fc]">
        <div className="flex min-w-0 grow flex-col">
          {propRows.map((row, i) => (
            <Property key={i} row={row} />
          ))}
        </div>
        <Scrollbar before="h-[3px]" thumb="h-[356px] from-[#e3ecf8] to-[#bccde6]" className="bg-[#d5e0ef]" />
      </div>
    </div>
  </aside>
);

export default function App() {
  return (
    <div className="flex h-screen min-h-[654px] flex-col bg-[#bdcfe8] font-['DejaVu_Sans_Condensed','DejaVu_Sans',sans-serif] text-[8px]">
      <TitleBar />
      <RibbonTabs />
      <Ribbon />
      <div className="flex min-h-0 grow border-b border-[#8ea3c0] pt-[3px] pr-[2px] pb-[2px] pl-[6px]">
        <LeftPanel />
        <Canvas />
        <RightPanel />
      </div>
    </div>
  );
}
